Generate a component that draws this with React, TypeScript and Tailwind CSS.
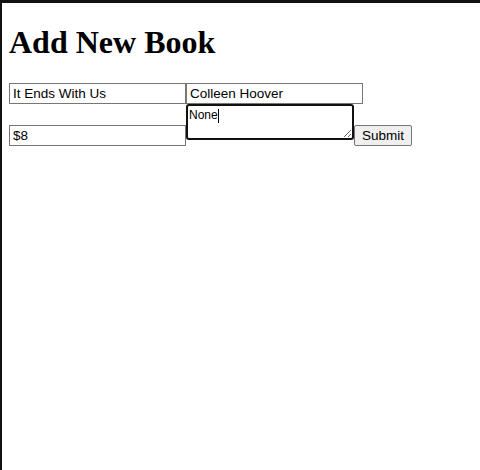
import { useState } from 'react'

// Plain unstyled-browser look: Times heading, Arial form controls.
const FIELD =
  'h-[21px] w-[177px] border border-[#767676] bg-white pl-[3px] pr-[2px] py-px font-["Liberation_Sans",Arial,sans-serif] text-[13.5px] leading-[17px] text-black outline-none'

export default function App() {
  const [title, setTitle] = useState('It Ends With Us')
  const [author, setAuthor] = useState('Colleen Hoover')
  const [notes, setNotes] = useState('None')
  const [price, setPrice] = useState('$8')

  return (
    <div className="min-h-[470px] border-l-2 border-t-[3px] border-[#111111] bg-white pl-[7px] pt-[21px] text-black">
      <h1 className="mb-[22px] h-[37px] font-['Liberation_Serif','Times_New_Roman',serif] text-[32px] font-bold leading-[37px]">
        Add New Book
      </h1>

      <form onSubmit={(e) => e.preventDefault()}>
        <div className="flex">
          <input
            className={FIELD}
            value={title}
            onChange={(e) => setTitle(e.target.value)}
          />
          <input
            className={FIELD}
            value={author}
            onChange={(e) => setAuthor(e.target.value)}
          />
        </div>

        <div className="flex items-start">
          <input
            className={`${FIELD} mt-[21px]`}
            value={price}
            onChange={(e) => setPrice(e.target.value)}
          />
          <div className="relative">
            <textarea
              className="block h-[36px] w-[168px] rounded-[3px] border-2 border-[#101010] bg-white px-px py-[2px] font-['Liberation_Sans',Arial,sans-serif] text-[12px] leading-[14px] text-black outline-none"
              value={notes}
              onChange={(e) => setNotes(e.target.value)}
            />
            {/* fake caret after the text */}
            <span className="pointer-events-none absolute left-[32px] top-[5px] h-[14px] w-px bg-black" />
          </div>
          <button
            type="submit"
            className="mt-[21px] h-[21px] w-[58px] rounded-[2px] border border-[#767676] bg-[#efefef] px-[6px] font-['Liberation_Sans',Arial,sans-serif] text-[13.5px] leading-[17px] text-black"
          >
            Submit
          </button>
        </div>
      </form>
    </div>
  )
}
